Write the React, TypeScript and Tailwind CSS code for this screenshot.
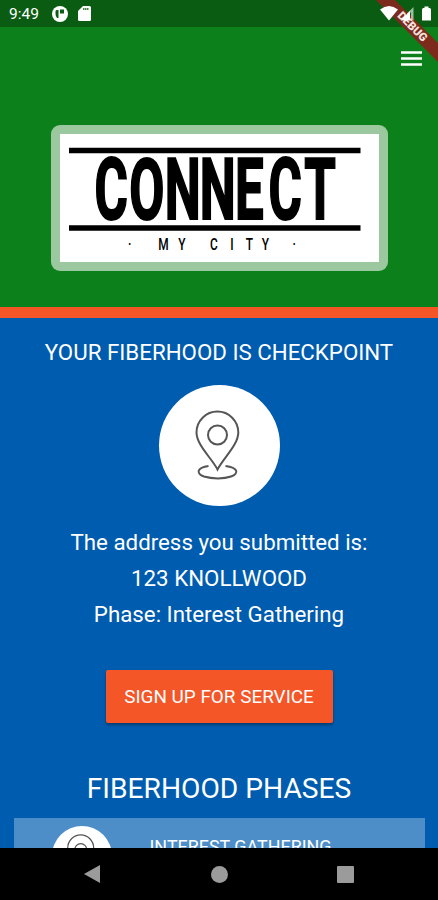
const Pin = ({ className }: { className: string }) => (
  <svg className={className} viewBox="0 0 121 121" fill="none" stroke="#555" strokeWidth="2">
    <path d="M58.500 84.500C53 73.500 37.500 60 37.500 47.500A20.900 20.900 0 0 1 79.300 47.500C79.300 60 64 73.500 58.500 84.500Z" />
    <circle cx="58.500" cy="50" r="9.500" />
    <path d="M49.500 81C38 82.500 36.500 88.500 45 91.500C53 94 65 94 72 91.500C80.500 88.500 79 82.500 66.500 81" />
  </svg>
);

const DebugBanner = () => (
  <svg className="absolute top-0 right-0 h-[64px] w-[64px]" viewBox="374 0 64 64">
    <path d="M376 0H395L438 43V62Z" fill="#7c2a1b" />
    <text
      transform="translate(412.500 26.500) rotate(45)"
      textAnchor="middle"
      y="4"
      fontFamily="Roboto, sans-serif"
      fontWeight="900"
      fontSize="11.500"
      fill="#f3e4e0"
    >
      DEBUG
    </text>
  </svg>
);

const StatusBar = () => (
  <div className="flex h-[27px] shrink-0 items-center bg-[#0a5c12] pl-[9px] text-white">
    <span className="w-[31px] pt-[2px] text-[15.500px] leading-[27px] whitespace-nowrap">9:49</span>
    <svg className="ml-[12px] h-4 w-4" viewBox="0 0 16 16">
      <circle cx="8" cy="8" r="8" fill="#fff" />
      <path d="M4.500 4H6.500V12H5Q3.500 10 3.500 8V5ZM8 3.500H12V7.500H8Z" fill="#0a5c12" />
    </svg>
    <svg className="ml-[10px] h-[15px] w-[13px]" viewBox="0 0 13 15">
      <path d="M5 0H11.500Q13 0 13 1.500V13.500Q13 15 11.500 15H1.500Q0 15 0 13.500V5Z" fill="#fff" />
      <path d="M5 3H11" stroke="#0a5c12" strokeWidth="1.500" strokeDasharray="1.500 .5" />
    </svg>
    <svg className="relative z-10 ml-auto h-[27px] w-[58px]" viewBox="0 0 58 27" fill="#fff">
      <path d="M0 9.500Q9 2.500 18 9.500L9 20.500Z" />
      <path d="M33.500 7V20.500H31V12L27 16V13.500Z" fillOpacity=".6" />
      <path d="M30 11V20.500H20.500Z" />
      <path d="M42 9.500Q42 8 43.500 8H44.500V6.500H48.500V8H49.500Q51 8 51 9.500V20.500H42Z" />
    </svg>
  </div>
);

const Logo = () => (
  <div className="h-[146px] w-[337px] rounded-[9px] bg-[#9cc8a0] p-[9px]">
    <svg className="h-[128px] w-[319px] bg-white" viewBox="60 134 319 128">
      <path d="M69 150.500H360.500M69 228H360.500" stroke="#000" strokeWidth="5.500" />
      <text
        transform="translate(0 219) scale(.6 1)"
        x="157.500 215.500 274.500 333 391.500 447.500 507"
        y="0"
        fontFamily="Roboto, sans-serif"
        fontWeight="700"
        fontSize="85"
        stroke="#000"
        strokeWidth="2"
      >
        CONNECT
      </text>
      <text
        transform="translate(0 249.500) scale(.7 1)"
        x="183 226 254.500 300 329 351 374 418"
        y="0"
        fontFamily="Roboto, sans-serif"
        fontWeight="500"
        fontSize="17"
      >
        ·MYCITY·
      </text>
    </svg>
  </div>
);

export default function App() {
  return (
    <div className="relative flex h-[900px] w-[438px] flex-col overflow-hidden bg-[#005cae] font-['Roboto',sans-serif] text-white">
      <StatusBar />
      <header className="flex h-[291px] shrink-0 flex-col items-center border-b-[11px] border-[#f55627] bg-[#0c801b]">
        <div className="flex h-[98px] w-full justify-end pt-[24px] pr-[16px]">
          <svg className="h-[15px] w-[21px]" viewBox="0 0 21 15" stroke="#fff" strokeWidth="2.400">
            <path d="M0 1.500H21M0 7.500H21M0 13.500H21" />
          </svg>
        </div>
        <Logo />
      </header>
      <main className="flex min-h-0 flex-1 flex-col items-center overflow-hidden">
        <h1 className="mt-[18px] text-[22.300px] leading-[32px] whitespace-nowrap">YOUR FIBERHOOD IS CHECKPOINT</h1>
        <div className="mt-[17px] h-[121px] w-[121px] shrink-0 rounded-full bg-white">
          <Pin className="h-[121px] w-[121px]" />
        </div>
        <div className="mt-[18px] text-center text-[22.300px] leading-[36px] whitespace-nowrap">
          <p>The address you submitted is:</p>
          <p>123 KNOLLWOOD</p>
          <p>Phase: Interest Gathering</p>
        </div>
        <button className="mt-[38px] h-[53px] w-[227px] shrink-0 rounded-[2px] bg-[#f55627] pt-[2px] text-[18.900px] whitespace-nowrap shadow-[0_2px_3px_rgba(0,0,0,0.35)]">
          SIGN UP FOR SERVICE
        </button>
        <h2 className="mt-[48px] text-[28.200px] leading-[36px] whitespace-nowrap">FIBERHOOD PHASES</h2>
        <section className="mt-[11px] flex h-[80px] w-[411px] shrink-0 items-start bg-[#4d8ec9]">
          <div className="mt-[8px] ml-[38px] h-[60px] w-[60px] rounded-full bg-white">
            <Pin className="h-[60px] w-[60px] scale-125" />
          </div>
          <span className="mt-[16px] ml-[38px] text-[17.900px] leading-[26px] whitespace-nowrap">INTEREST GATHERING</span>
        </section>
      </main>
      <nav className="flex h-[52px] shrink-0 items-center bg-black pl-[84px]">
        <svg className="h-[18px] w-[16px]" viewBox="0 0 16 18" fill="#9b9b9b"><path d="M16 0V18L0 9Z" /></svg>
        <div className="ml-[111px] h-[17px] w-[17px] rounded-full bg-[#9b9b9b]" />
        <div className="ml-[109px] h-[17px] w-[17px] rounded-[1px] bg-[#9b9b9b]" />
      </nav>
      <DebugBanner />
    </div>
  );
}
